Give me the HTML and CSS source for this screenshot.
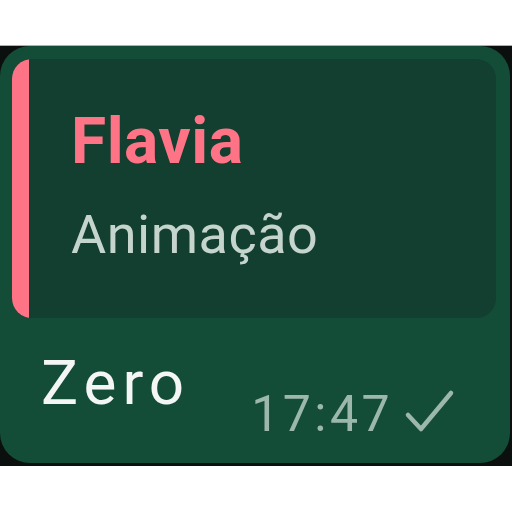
FILE: index.html
```html
<!DOCTYPE html>
<html>
<head>
<meta charset="utf-8">
<link rel="stylesheet" href="styles.css">
</head>
<body>
<div class="band">
  <div class="bubble">
    <div class="quote">
      <div class="bar"></div>
      <div class="quote-body">
        <div class="author">Flavia</div>
        <div class="kind">Animação</div>
      </div>
    </div>
    <div class="row">
      <div class="msg">Zero</div>
      <div class="meta">
        <span class="time">17:47</span>
        <svg class="check" width="52" height="46" viewBox="0 0 52 46">
          <polyline points="4,27 17,41 47,5" fill="none" stroke="#9cb7ab" stroke-width="4.5" stroke-linecap="round" stroke-linejoin="round"/>
        </svg>
      </div>
    </div>
  </div>
</div>
</body>
</html>
```
FILE: styles.css
```css
html, body {
  margin: 0;
  padding: 0;
  background: #ffffff;
}
body {
  font-family: Roboto, "Liberation Sans", sans-serif;
}
.band {
  margin-top: 45px;
  height: 421px;
  background: #0b0f0d;
  border-top: 1px solid #a9b3ae;
  box-sizing: border-box;
}
.bubble {
  width: 510px;
  height: 417px;
  background: #134d38;
  border-radius: 30px;
  box-sizing: border-box;
  padding: 13px 14px 0 12px;
  display: flex;
  flex-direction: column;
}
.quote {
  height: 259px;
  background: #123f2f;
  border-radius: 20px;
  overflow: hidden;
  display: flex;
}
.bar {
  width: 17px;
  background: #ff7386;
  flex: none;
}
.quote-body {
  padding: 51px 0 0 42px;
  display: flex;
  flex-direction: column;
}
.author {
  font-size: 64px;
  line-height: 64px;
  font-weight: 700;
  letter-spacing: 0.5px;
  color: #ff7386;
}
.kind {
  margin-top: 34px;
  font-size: 54px;
  line-height: 54px;
  letter-spacing: 0.5px;
  color: #c5d4cd;
}
.row {
  display: flex;
  align-items: flex-start;
}
.msg {
  margin: 34px 0 0 29px;
  font-size: 62px;
  line-height: 62px;
  letter-spacing: 6px;
  color: #f3f6f4;
}
.meta {
  margin: 71px 0 0 61px;
  display: flex;
  align-items: flex-start;
}
.time {
  font-size: 50px;
  line-height: 50px;
  letter-spacing: 3.5px;
  color: #9cb7ab;
}
.check {
  margin: -1px 0 0 11px;
}
```
